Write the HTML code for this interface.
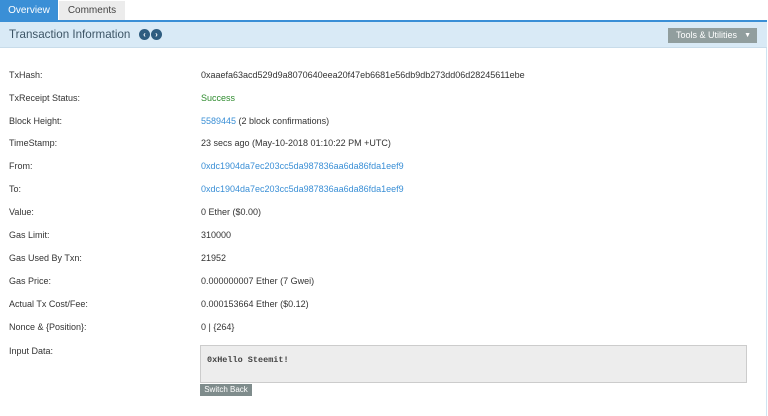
<!DOCTYPE html>
<html><head><style>
*{margin:0;padding:0;box-sizing:border-box}
body{width:768px;height:416px;background:#fff;font-family:"Liberation Sans",sans-serif;font-size:9px;color:#333;position:relative;overflow:hidden}
.a{position:absolute}
.tab1{left:0;top:0;width:58px;height:21px;background:#3a8fd6;color:#fff;font-size:10px;line-height:21px;text-align:center}
.tab2{left:59px;top:1px;width:66px;height:20px;background:#ececec;color:#444;font-size:10px;line-height:20px;text-align:center}
.line{left:0;top:20px;width:767px;height:2px;background:#3a8fd6}
.hdr{left:0;top:22px;width:767px;height:26px;background:#d9eaf6;border-bottom:1px solid #c8dcea}
.title{left:9px;top:27px;font-size:11.6px;color:#3d5566;line-height:16px}
.ic{top:29px;width:11px;height:11px;border-radius:50%;background:#2f5d80;color:#fff;font-size:8px;line-height:11px;text-align:center;font-weight:bold}
.btn{left:668px;top:28px;width:89px;height:15px;background:#919e9e;color:#fff;font-size:9px;line-height:15px;padding-left:8px}
.rb{left:766px;top:48px;width:1px;height:368px;background:#cfe4f2}
.l{left:9px}.v{left:201px}
.r{position:absolute;line-height:11px}
.lk{color:#3a8fd6}.g{color:#2e8b2e}
.ta{left:200px;top:345px;width:547px;height:38px;background:#ededed;border:1px solid #ccc;font-family:"Liberation Mono",monospace;font-size:8.5px;color:#444;padding:9px 0 0 6px;font-weight:bold}
.sb{left:200px;top:384px;width:52px;height:12px;background:#7f8c8c;color:#fff;font-size:8px;line-height:12px;text-align:center}
</style></head><body>
<div class="a tab1">Overview</div>
<div class="a tab2">Comments</div>
<div class="a line"></div>
<div class="a hdr"></div>
<div class="a title">Transaction Information</div>
<div class="a ic" style="left:139px">&#8249;</div>
<div class="a ic" style="left:151px">&#8250;</div>
<div class="a btn">Tools &amp; Utilities <span style="position:absolute;right:6px;top:0;font-size:7px">&#9660;</span></div>
<div class="a rb"></div>

<div class="r l" style="top:70px">TxHash:</div><div class="r v" style="top:70px">0xaaefa63acd529d9a8070640eea20f47eb6681e56db9db273dd06d28245611ebe</div>
<div class="r l" style="top:93px">TxReceipt Status:</div><div class="r v g" style="top:93px">Success</div>
<div class="r l" style="top:116px">Block Height:</div><div class="r v" style="top:116px"><span class="lk">5589445</span> (2 block confirmations)</div>
<div class="r l" style="top:138px">TimeStamp:</div><div class="r v" style="top:138px">23 secs ago (May-10-2018 01:10:22 PM +UTC)</div>
<div class="r l" style="top:161px">From:</div><div class="r v lk" style="top:161px">0xdc1904da7ec203cc5da987836aa6da86fda1eef9</div>
<div class="r l" style="top:184px">To:</div><div class="r v lk" style="top:184px">0xdc1904da7ec203cc5da987836aa6da86fda1eef9</div>
<div class="r l" style="top:207px">Value:</div><div class="r v" style="top:207px">0 Ether ($0.00)</div>
<div class="r l" style="top:230px">Gas Limit:</div><div class="r v" style="top:230px">310000</div>
<div class="r l" style="top:253px">Gas Used By Txn:</div><div class="r v" style="top:253px">21952</div>
<div class="r l" style="top:276px">Gas Price:</div><div class="r v" style="top:276px">0.000000007 Ether (7 Gwei)</div>
<div class="r l" style="top:299px">Actual Tx Cost/Fee:</div><div class="r v" style="top:299px">0.000153664 Ether ($0.12)</div>
<div class="r l" style="top:322px">Nonce &amp; {Position}:</div><div class="r v" style="top:322px">0 | {264}</div>
<div class="r l" style="top:346px">Input Data:</div>
<div class="a ta">0xHello Steemit!</div>
<div class="a sb">Switch Back</div>
</body></html>
